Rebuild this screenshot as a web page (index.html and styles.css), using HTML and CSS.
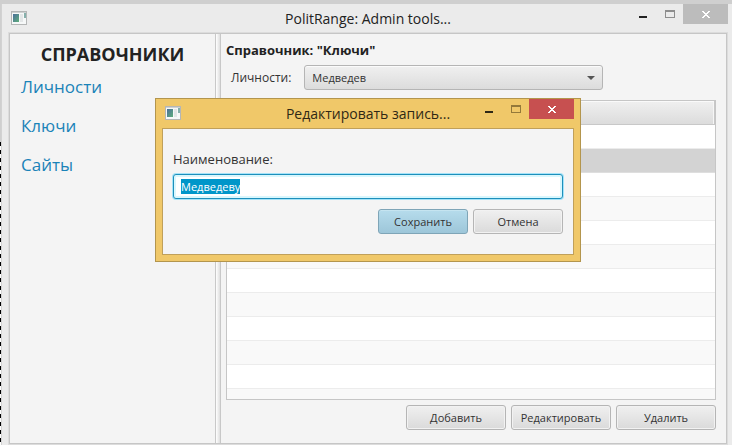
FILE: index.html
```html
<!DOCTYPE html>
<html lang="ru">
<head>
<meta charset="utf-8">
<title>PolitRange: Admin tools...</title>
<link rel="stylesheet" href="styles.css">
</head>
<body>
<svg class="symbols" aria-hidden="true">
  <defs>
    <linearGradient id="pane" x1="0" y1="0" x2="1" y2="1">
      <stop offset="0" stop-color="#4a6e9a"/>
      <stop offset="1" stop-color="#5fae7c"/>
    </linearGradient>
  </defs>
  <symbol id="app" viewBox="0 0 16 14">
    <rect x="0.5" y="0.5" width="15" height="13" fill="#f6f8f8" stroke="#b4b6b6"/>
    <rect x="1" y="1" width="14" height="1" fill="#cfd2d2"/>
    <rect x="2" y="3" width="6" height="8" fill="url(#pane)"/>
    <rect x="9" y="3" width="3" height="8" fill="#e3e6e7"/>
    <rect x="13" y="2" width="2" height="5" fill="#86b0ac"/>
  </symbol>
  <symbol id="min" viewBox="0 0 10 10"><rect x="1" y="7" width="8" height="2" fill="currentColor"/></symbol>
  <symbol id="max" viewBox="0 0 10 8">
    <path d="M0 0h10v8H0zM1 2v5h8V2z" fill="currentColor" fill-rule="evenodd"/>
  </symbol>
  <symbol id="close" viewBox="0 0 8 7">
    <path d="M0 0h2v1h1v1h2V1h1V0h2v1H7v1H6v1H5v1h1v1h1v1h1v1H6V6H5V5H3v1H2v1H0V6h1V5h1V4h1V3H2V2H1V1H0z" fill="currentColor"/>
  </symbol>
</svg>

<div class="edge"></div>
<div class="window">
  <header class="titlebar">
    <svg class="app-icon"><use href="#app"/></svg>
    <h1 class="title">PolitRange: Admin tools...</h1>
    <div class="controls">
      <button class="control" aria-label="Свернуть"><svg class="glyph-min"><use href="#min"/></svg></button>
      <button class="control control-max" aria-label="Развернуть"><svg class="glyph-max"><use href="#max"/></svg></button>
      <button class="control control-close" aria-label="Закрыть"><svg class="glyph-close"><use href="#close"/></svg></button>
    </div>
  </header>
  <div class="content">
    <nav class="sidebar">
      <h2 class="sidebar-title">СПРАВОЧНИКИ</h2>
      <a class="nav-link" href="#persons">Личности</a>
      <a class="nav-link" href="#keys">Ключи</a>
      <a class="nav-link" href="#sites">Сайты</a>
    </nav>
    <div class="divider"></div>
    <main class="main">
      <h2 class="main-title">Справочник: "Ключи"</h2>
      <div class="filter">
        <label for="person">Личности:</label>
        <select id="person" class="combo"><option>Медведев</option></select>
      </div>
      <div class="table-box">
        <table class="table">
          <thead><tr><th></th></tr></thead>
          <tbody>
            <tr><td></td></tr>
            <tr class="selected"><td></td></tr>
            <tr><td></td></tr>
            <tr><td></td></tr>
            <tr><td></td></tr>
            <tr><td></td></tr>
            <tr><td></td></tr>
            <tr><td></td></tr>
            <tr><td></td></tr>
            <tr><td></td></tr>
            <tr><td></td></tr>
            <tr><td></td></tr>
          </tbody>
        </table>
      </div>
      <div class="actions">
        <button class="button">Добавить</button>
        <button class="button">Редактировать</button>
        <button class="button">Удалить</button>
      </div>
    </main>
  </div>
</div>

<div class="dialog" role="dialog" aria-labelledby="dialog-title">
  <header class="titlebar">
    <svg class="app-icon"><use href="#app"/></svg>
    <h2 class="title" id="dialog-title">Редактировать запись...</h2>
    <div class="controls">
      <button class="control" aria-label="Свернуть"><svg class="glyph-min"><use href="#min"/></svg></button>
      <button class="control control-max" aria-label="Развернуть"><svg class="glyph-max"><use href="#max"/></svg></button>
      <button class="control control-close" aria-label="Закрыть"><svg class="glyph-close"><use href="#close"/></svg></button>
    </div>
  </header>
  <form class="dialog-body">
    <label class="field-label" for="name">Наименование:</label>
    <input class="field" id="name" type="text" value="Медведеву" autocomplete="off" spellcheck="false">
    <div class="dialog-actions">
      <button class="button button-default" type="submit">Сохранить</button>
      <button class="button" type="button">Отмена</button>
    </div>
  </form>
</div>
<script src="script.js"></script>
</body>
</html>
```
FILE: styles.css
```css
* {
  box-sizing: border-box;
}

body {
  margin: 0;
  height: 100vh;
  min-height: 440px;
  padding-top: 4px;
  display: flex;
  overflow: hidden;
  background: #cfcfcf;
  color: #333;
  font: 12px/16px "Open Sans", "Noto Sans", sans-serif;
}

h1,
h2 {
  margin: 0;
}

button,
input,
select {
  color: inherit;
  font: 11px/16px "Open Sans", "Noto Sans", sans-serif;
}

.symbols {
  position: absolute;
  width: 0;
  height: 0;
}

/* Dashed strip along the left side of the window */
.edge {
  width: 1px;
  margin-top: 138px;
  background: repeating-linear-gradient(#000 0 4px, #fff 4px 8px);
}

.window {
  flex: 1;
  min-width: 0;
  display: flex;
  flex-direction: column;
  padding: 0 4px 0 6px;
  border-left: 1px solid #d2d2d2;
  background: #ebebeb;
}

.titlebar {
  display: grid;
  grid-template-columns: 1fr auto 1fr;
  height: 29px;
}

.app-icon {
  width: 16px;
  height: 14px;
  margin: 7px 0 0 3px;
}

.title {
  font-size: 14px;
  font-weight: 400;
  line-height: 29px;
  color: #222;
}

.controls {
  display: flex;
  justify-content: flex-end;
}

.control {
  display: flex;
  align-items: center;
  justify-content: center;
  width: 27px;
  height: 20px;
  padding: 0;
  border: 0;
  background: none;
  color: #222;
}

.control-max {
  color: #8e8e8e;
}

.control-close {
  width: 45px;
  background: #bcbcbc;
  color: #fff;
}

.glyph-min {
  width: 10px;
  height: 10px;
}

.glyph-max {
  width: 10px;
  height: 8px;
}

.glyph-close {
  width: 8px;
  height: 7px;
  shape-rendering: crispEdges;
}

.content {
  flex: 1;
  min-height: 0;
  display: flex;
  margin: 0 1px 1px;
  border: 1px solid #c6c6c6;
  box-shadow: 0 0 0 1px #dcdcdc;
  background: #f4f4f4;
}

.sidebar {
  width: 205px;
  padding: 8px 11px;
  display: flex;
  flex-direction: column;
  align-items: flex-start;
  gap: 15px;
}

.sidebar-title {
  align-self: center;
  font-size: 18px;
  line-height: 24px;
  color: #222;
}

.nav-link {
  font-size: 17px;
  line-height: 24px;
  color: #1a83b8;
  text-decoration: none;
}

.sidebar-title + .nav-link {
  margin-top: -6px;
}

.divider {
  width: 6px;
  border: 1px solid #c8c8c8;
  border-width: 0 1px;
  background: linear-gradient(90deg, #fff, #dedede);
}

.main {
  flex: 1;
  min-width: 0;
  display: flex;
  flex-direction: column;
  padding: 8px 10px 13px 5px;
}

.main-title {
  font-size: 13px;
  line-height: 16px;
  color: #222;
}

.filter {
  display: flex;
  align-items: center;
  gap: 13px;
  margin: 7px 0 10px;
  padding-left: 5px;
}

.combo {
  appearance: none;
  width: 299px;
  height: 25px;
  padding: 0 24px 0 7px;
  border: 1px solid #b5b5b5;
  border-radius: 3px;
  box-shadow: inset 0 1px #fbfbfb;
  background: linear-gradient(#f0f0f0, #dcdcdc);
}

.filter::after {
  content: "";
  margin-left: -29px;
  border: 4px solid transparent;
  border-top-color: #555;
  border-bottom: 0;
  pointer-events: none;
  z-index: 1;
}

.table-box {
  flex: 1;
  min-height: 0;
  overflow: hidden;
  border: 1px solid #c6c6c6;
  background: #fff;
}

.table {
  width: 100%;
  border-collapse: separate;
  border-spacing: 0;
}

.table th {
  height: 24px;
  padding: 0;
  border-right: 1px solid #c8c8c8;
  border-bottom: 1px solid #c8c8c8;
  box-shadow: inset 0 1px #fafafa, inset -1px 0 #f6f6f6;
  background: linear-gradient(#f0f0f0, #dcdcdc);
}

.table td {
  height: 24px;
  padding: 0;
  border-bottom: 1px solid #ececec;
}

.table tr:nth-child(even) td {
  background: #f9f9f9;
}

.table tr.selected:nth-child(n) td {
  border-color: #dedede;
  background: #d3d3d3;
}

.actions,
.dialog-actions {
  display: flex;
  justify-content: flex-end;
  gap: 5px;
}

.actions {
  margin-top: 5px;
}

.button {
  width: 100px;
  height: 25px;
  padding: 0;
  border: 1px solid #b5b5b5;
  border-radius: 3px;
  box-shadow: inset 0 0 0 1px #f2f2f2;
  background: linear-gradient(#f0f0f0, #dadada);
  white-space: nowrap;
}

.dialog {
  position: absolute;
  z-index: 2;
  top: 98px;
  left: 155px;
  width: 426px;
  padding: 0 6px 6px;
  border: 1px solid #b3954d;
  background: #f0c869;
}

.dialog .title,
.dialog .control {
  color: #2f2815;
}

.dialog .control-max {
  color: #94793a;
}

.dialog .control-close {
  background: #c75050;
  color: #fff;
}

.dialog-body {
  display: flex;
  flex-direction: column;
  padding: 21px 10px 20px;
  border: 1px solid #c0a05a;
  background: #f4f4f4;
}

.field-label {
  font-size: 13px;
  line-height: 18px;
}

.field {
  height: 25px;
  margin: 6px 0 10px;
  padding: 0 7px;
  border: 1px solid #1d8fbb;
  border-radius: 3px;
  outline: 0;
  box-shadow: 0 0 0 1px #a5e3f8, inset 0 0 0 2px #d9f7fd;
  background: #fff;
}

.field::selection {
  background: #0096c9;
  color: #fff;
}

.dialog .button {
  width: 90px;
}

.dialog .button-default {
  border-color: #7fa5b7;
  box-shadow: inset 0 1px #c5e4f0;
  background: linear-gradient(#b6dcec, #9dc6d9);
}
```
FILE: script.js
```js
const field = document.getElementById("name");
field.focus();
field.select();
```
